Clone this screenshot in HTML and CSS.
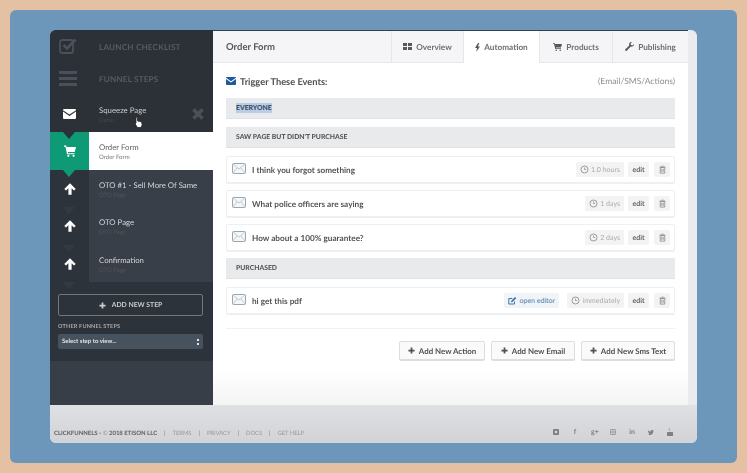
FILE: index.html
```html
<!DOCTYPE html>
<html lang="en">
<head>
<meta charset="utf-8">
<title>Order Form</title>
<link rel="stylesheet" href="styles.css">
</head>
<body>
<svg class="defs" width="0" height="0" aria-hidden="true">
  <symbol id="env-line" viewBox="0 0 14 11"><rect x=".5" y=".5" width="13" height="10" rx="1" fill="#f4f6f8" stroke="#9aa6b0"/><path d="M1 1l6 5 6-5M1 10l4-5M13 10L9 5" fill="none" stroke="#b4bec6" stroke-width=".8"/></symbol>
  <symbol id="clock" viewBox="0 0 10 10"><circle cx="5" cy="5" r="3.9" fill="none" stroke="#8f9398" stroke-width="1"/><path d="M5 2.800V5h1.800" fill="none" stroke="#8f9398" stroke-width=".9"/></symbol>
  <symbol id="trash" viewBox="0 0 10 10"><path d="M2.500 2.800h5V9h-5zM1.800 2.300h6.400M4 1.200h2M4.200 4.200v3.400M5.800 4.200v3.400" fill="none" stroke="#85898e" stroke-width=".9"/></symbol>
  <symbol id="plus" viewBox="0 0 8 8"><path d="M3 .5h2v2.500h2.500v2H5v2.500H3V5H.5V3H3z" fill="currentColor"/></symbol>
  <symbol id="up" viewBox="0 0 12 12"><path d="M6 .3l5.700 5.700-1.700 1.600L7.600 5.300V11.700H4.400V5.300L2 7.600.3 6z" fill="#fff"/></symbol>
</svg>
<div class="panel">
  <div class="window">
    <div class="top">
      <aside class="sidebar">
        <div class="nav-row nav-a">
          <svg class="nav-icon" width="18" height="16" viewBox="0 0 18 16"><rect x="1" y="2" width="13" height="13" rx="2" fill="none" stroke="#4a515b" stroke-width="1.800"/><path d="M4.500 7l3.500 3.500L16.500 1.500" fill="none" stroke="#4a515b" stroke-width="2.600"/></svg>
          <span>LAUNCH CHECKLIST</span>
        </div>
        <div class="nav-row nav-b">
          <svg class="nav-icon" width="18" height="15" viewBox="0 0 18 15"><path d="M0 0h18v3H0zM0 6h18v3H0zM0 12h18v3H0z" fill="#4a515b"/></svg>
          <span>FUNNEL STEPS</span>
        </div>
        <div class="step step-hover">
          <div class="step-icon"><svg width="13" height="10" viewBox="0 0 13 10"><path d="M0 1.200V1a1 1 0 0 1 1-1h11a1 1 0 0 1 1 1v.2L6.500 5.500z" fill="#fff"/><path d="M0 2.600l6.500 4.300L13 2.600V9a1 1 0 0 1-1 1H1a1 1 0 0 1-1-1z" fill="#fff"/></svg></div>
          <div class="step-text"><b>Squeeze Page</b><small>Optin</small></div>
          <svg class="step-x" width="12" height="12" viewBox="0 0 12 12"><path d="M1.500 1.500l9 9M10.500 1.500l-9 9" stroke="#4b5159" stroke-width="3.500"/></svg>
          <svg class="cursor" width="9" height="12" viewBox="0 0 9 12"><path d="M2 1l1.200 0 .5 4 3.800.8.700 3L7 11.500H3.500L.8 7.500l1.200-.3z" fill="#fff" stroke="#222" stroke-width=".8"/></svg>
        </div>
        <div class="step step-active">
          <div class="step-icon"><svg width="12" height="12" viewBox="0 0 11 11"><path d="M0 .5h2l.4 1.300H11L9.800 6.500H3.500l.2 1h6v1H2.800L1.300 1.500H0z" fill="#fff"/><circle cx="4" cy="9.900" r="1" fill="#fff"/><circle cx="8.800" cy="9.900" r="1" fill="#fff"/></svg></div>
          <div class="step-text"><b>Order Form</b><small>Order Form</small></div>
        </div>
        <div class="step">
          <div class="step-icon"><svg width="12" height="12"><use href="#up"/></svg></div>
          <div class="step-text"><b>OTO #1 - Sell More Of Same</b><small>OTO Page</small></div>
        </div>
        <div class="step step-tall">
          <div class="step-icon"><svg width="12" height="12"><use href="#up"/></svg></div>
          <div class="step-text"><b>OTO Page</b><small>OTO Page</small></div>
        </div>
        <div class="step">
          <div class="step-icon"><svg width="12" height="12"><use href="#up"/></svg></div>
          <div class="step-text"><b>Confirmation</b><small>OTO Page</small></div>
        </div>
        <div class="side-tools">
          <div class="add-step"><svg width="7" height="7"><use href="#plus"/></svg><span>ADD NEW STEP</span></div>
          <div class="other-label">OTHER FUNNEL STEPS</div>
          <div class="select"><span>Select step to view...</span><i></i></div>
        </div>
      </aside>
      <main class="main">
        <header class="tabs">
          <div class="page-title">Order Form</div>
          <div class="tab tab-1"><svg width="9" height="7" viewBox="0 0 9 7"><path d="M0 0h4v3H0zM5 0h4v3H5zM0 4h4v3H0zM5 4h4v3H5z" fill="#555a60"/></svg>Overview</div>
          <div class="tab tab-2 tab-on"><svg width="5" height="9" viewBox="0 0 5 9"><path d="M3 0L0 5h2L1.200 9 5 3.500H3L4.200 0z" fill="#555a60"/></svg>Automation</div>
          <div class="tab tab-3"><svg width="9" height="8" viewBox="0 0 9 8"><path d="M0 0h1.600l.3 1H9L8 4.500H2.900l.2.800H8V6H2.300L1 .8H0z" fill="#555a60"/><circle cx="3.200" cy="7.200" r=".8" fill="#555a60"/><circle cx="7.200" cy="7.200" r=".8" fill="#555a60"/></svg>Products</div>
          <div class="tab tab-4"><svg width="9" height="9" viewBox="0 0 9 9"><path d="M9 2L7.500 3.400 6 3 5.600 1.500 7 0C5.500-.3 4 .8 4.100 2.500c0 .3 0 .6.200.9L.3 7.300a1 1 0 0 0 1.400 1.400l3.900-4C7.300 5.200 9.200 3.800 9 2z" fill="#555a60"/></svg>Publishing</div>
        </header>
        <section class="content">
          <div class="trigger">
            <svg width="10" height="8" viewBox="0 0 10 8"><path d="M0 .8A.8.800 0 0 1 .8 0h8.400a.8.800 0 0 1 .8.800L5 4.200z" fill="#1d5c9c"/><path d="M0 2l5 3.400L10 2v5.200a.8.800 0 0 1-.8.800H.8a.8.800 0 0 1-.8-.8z" fill="#1d5c9c"/></svg>
            <strong>Trigger These Events:</strong>
            <span>(Email/SMS/Actions)</span>
          </div>
          <div class="group-bar"><mark>EVERYONE</mark></div>
          <div class="group-bar"><span>SAW PAGE BUT DIDN'T PURCHASE</span></div>
          <div class="card">
            <svg class="env" width="14" height="11"><use href="#env-line"/></svg>
            <b>I think you forgot something</b>
            <span class="chip chip-time"><svg width="9" height="9"><use href="#clock"/></svg>1.0 hours</span>
            <span class="chip chip-edit">edit</span>
            <span class="chip chip-del"><svg width="9" height="9"><use href="#trash"/></svg></span>
          </div>
          <div class="card">
            <svg class="env" width="14" height="11"><use href="#env-line"/></svg>
            <b>What police officers are saying</b>
            <span class="chip chip-time"><svg width="9" height="9"><use href="#clock"/></svg>1 days</span>
            <span class="chip chip-edit">edit</span>
            <span class="chip chip-del"><svg width="9" height="9"><use href="#trash"/></svg></span>
          </div>
          <div class="card">
            <svg class="env" width="14" height="11"><use href="#env-line"/></svg>
            <b>How about a 100% guarantee?</b>
            <span class="chip chip-time"><svg width="9" height="9"><use href="#clock"/></svg>2 days</span>
            <span class="chip chip-edit">edit</span>
            <span class="chip chip-del"><svg width="9" height="9"><use href="#trash"/></svg></span>
          </div>
          <div class="group-bar"><span>PURCHASED</span></div>
          <div class="card card-last">
            <svg class="env" width="14" height="11"><use href="#env-line"/></svg>
            <b>hi get this pdf</b>
            <span class="chip chip-open"><svg width="9" height="8" viewBox="0 0 9 8"><path d="M6.500 4.500V7H.8V1.500h3.500" fill="none" stroke="#3f74a8"/><path d="M3 5.200l.3-1.500L7 0l1.300 1.200L4.500 5z" fill="#3f74a8"/></svg>open editor</span>
            <span class="chip chip-time"><svg width="9" height="9"><use href="#clock"/></svg>immediately</span>
            <span class="chip chip-edit">edit</span>
            <span class="chip chip-del"><svg width="9" height="9"><use href="#trash"/></svg></span>
          </div>
          <div class="actions">
            <div class="btn btn-a"><svg width="7" height="7"><use href="#plus"/></svg>Add New Action</div>
            <div class="btn btn-b"><svg width="7" height="7"><use href="#plus"/></svg>Add New Email</div>
            <div class="btn btn-c"><svg width="7" height="7"><use href="#plus"/></svg>Add New Sms Text</div>
          </div>
        </section>
      </main>
    </div>
    <footer class="footer">
      <div class="foot-links">
        <strong>CLICKFUNNELS - <em>©</em> 2018 ETISON LLC</strong>
        <i>|</i><span>TERMS</span><i>|</i><span>PRIVACY</span><i>|</i><span>DOCS</span><i>|</i><span>GET HELP</span>
      </div>
      <div class="socials">
        <svg width="6" height="6" viewBox="0 0 6 6"><rect width="6" height="6" rx="1" fill="#7d8085"/><circle cx="3" cy="3" r="1.300" fill="#d6d7da"/></svg>
        <span>f</span>
        <span>g+</span>
        <svg width="6" height="6" viewBox="0 0 6 6"><rect x=".4" y=".4" width="5.200" height="5.200" rx="1" fill="none" stroke="#7d8085" stroke-width=".8"/><circle cx="3" cy="3" r="1.100" fill="none" stroke="#7d8085" stroke-width=".7"/></svg>
        <span>in</span>
        <svg width="6" height="5" viewBox="0 0 6 5"><path d="M6 .7L5.300 1.300C5.300 3.500 3.800 5 1.900 5 1.200 5 .5 4.800 0 4.400c.7.100 1.300-.1 1.800-.4C1.200 3.900.8 3.600.6 3.100h.5C.5 2.900.1 2.400.1 1.800c.2.100.4.100.6.100C.1 1.500 0 .8.300.3c.7.800 1.500 1.200 2.500 1.300C2.600.6 3.300 0 4.100 0c.4 0 .7.200 1 .4z" fill="#7d8085"/></svg>
        <svg width="6" height="8" viewBox="0 0 6 8"><path d="M1.500 0l.7 1.500L2.900 0h.4l-.9 2v1.300H2V2zM.5 4h5a.5.5 0 0 1 .5.500v3a.5.5 0 0 1-.5.500h-5a.5.5 0 0 1-.5-.5v-3A.5.5 0 0 1 .5 4z" fill="#7d8085"/></svg>
      </div>
    </footer>
  </div>
</div>
</body>
</html>
```

FILE: styles.css
```css
* { box-sizing: border-box; }
html, body { margin: 0; height: 100%; }
body {
  width: 747px;
  height: 473px;
  padding: 10px;
  overflow: hidden;
  background: #e5c1a3;
  font-family: "Lato", "Liberation Sans", sans-serif;
  text-rendering: geometricPrecision;
  color: #4d5156;
}
.defs { position: absolute; }
.panel {
  width: 727px;
  height: 453px;
  padding: 20px 40px;
  background: #6c97bb;
  border-radius: 6px;
}
.window {
  width: 647px;
  height: 413px;
  display: flex;
  flex-direction: column;
  border-radius: 6px;
  overflow: hidden;
  background: #ebebed;
}
/* Neutral text: soften and drop colour fringes, as in the reference capture */
.nav-row span, .step-text, .add-step, .other-label, .select span,
.page-title, .tab, .trigger strong, .trigger span, .group-bar span,
.card b, .chip-time, .chip-edit, .btn, .foot-links, .socials {
  filter: grayscale(1) blur(.25px);
}
.top { display: flex; height: 375px; }

/* Sidebar */
.sidebar {
  width: 163px;
  flex: none;
  display: flex;
  flex-direction: column;
  background: #373e48;
}
.nav-row {
  display: flex;
  align-items: center;
  background: #2c3138;
  color: #555b64;
  font-size: 8.100px;
  font-weight: 700;
  letter-spacing: .2px;
}
.nav-a { height: 32px; padding-top: 1px; }
.nav-b { height: 33px; }
.nav-icon { margin: -1px 22px 0 9px; flex: none; }
.nav-b .nav-icon { margin-top: 0; }
.step {
  position: relative;
  display: flex;
  height: 37px;
  color: #d4d7da;
  background: #383f49;
}
.step-tall { height: 38px; }
.step-icon {
  position: relative;
  width: 39px;
  flex: none;
  display: flex;
  align-items: center;
  justify-content: center;
  background: #2d333b;
}
.step-icon::after {
  content: "";
  position: absolute;
  left: 13px;
  bottom: -7px;
  z-index: 2;
  border-left: 6.500px solid transparent;
  border-right: 6.500px solid transparent;
  border-top: 7px solid #343a44;
}
.step-text {
  padding: 9px 0 0 10px;
  display: flex;
  flex-direction: column;
}
.step-text b { font-weight: 400; font-size: 7.800px; line-height: 12px; }
.step-text small { font-size: 6px; line-height: 9px; color: #4d545e; }
.step-hover { background: #2c3138; height: 37px; }
.step-hover .step-icon { background: #2c3138; }
.step-hover .step-icon::after { border-top-color: #2c3138; }
.step-hover .step-text b { color: #c9ccd0; }
.step-hover .step-text small { color: #3f454d; }
.step-x { position: absolute; right: 9px; top: 13px; }
.cursor { position: absolute; left: 84px; top: 21px; }
.step-active {
  height: 38px;
  background: #fff;
  color: #5c6066;
}
.step-active .step-icon { background: #0f9a76; }
.step-active .step-icon::after { border-top-color: #0f9a76; }
.step-active .step-text small { color: #777b80; }
.side-tools {
  height: 79px;
  padding: 12px 10px 0 8px;
  background: #2d333b;
}
.add-step {
  height: 22px;
  display: flex;
  align-items: center;
  justify-content: center;
  gap: 6px;
  border: 1.500px solid #71767d;
  border-radius: 2px;
  color: #c8cbcf;
  font-size: 6.800px;
  font-weight: 700;
}
.other-label {
  margin-top: 6px;
  color: #a6aab0;
  font-size: 5.500px;
  font-weight: 700;
  line-height: 10px;
  letter-spacing: .2px;
}
.select {
  height: 15px;
  margin-top: 2px;
  padding: 0 4px;
  display: flex;
  align-items: center;
  justify-content: space-between;
  background: #47525f;
  border-radius: 2px;
  color: #e2e4e7;
  font-size: 6px;
  font-weight: 700;
}
.select i { width: 2px; height: 6px; border-top: 2px solid #e2e4e7; border-bottom: 2px solid #e2e4e7; }

/* Main */
.main {
  width: 475px;
  flex: none;
  display: flex;
  flex-direction: column;
  background: linear-gradient(#fff 340px, #f4f4f5 375px);
}
.tabs {
  display: flex;
  height: 33px;
  flex: none;
  background: #f5f5f7;
  border-top: 1px solid #3a3f4a;
  border-bottom: 1px solid #e6e7ea;
  font-size: 8.200px;
  font-weight: 700;
  color: #6b6f74;
}
.page-title {
  width: 178px;
  padding: 1px 0 0 13px;
  display: flex;
  align-items: center;
  font-size: 9.500px;
  color: #55595e;
}
.tab {
  display: flex;
  align-items: center;
  justify-content: center;
  gap: 4px;
  border-left: 1px solid #e6e7ea;
}
.tab-1 { width: 72px; }
.tab-2 { width: 77px; }
.tab-3 { width: 72px; border-left: 0; }
.tab-4 { width: 76px; }
.tab-on { background: #fff; margin-bottom: -1px; border-right: 1px solid #e6e7ea; }
.content { padding: 0 13px; display: flex; flex-direction: column; }
.trigger {
  height: 35px;
  display: flex;
  align-items: center;
  padding-top: 1px;
  gap: 4px;
  font-size: 9.300px;
}
.trigger strong { color: #4c5055; }
.trigger span { margin-left: auto; color: #8a8e93; font-size: 8.500px; }
.group-bar {
  height: 21px;
  display: flex;
  align-items: center;
  padding-left: 10px;
  margin-bottom: 8px;
  background: #e9eaec;
  border-bottom: 1px solid #e1e2e5;
  color: #55595e;
  font-size: 6.800px;
  font-weight: 900;
}
.group-bar mark { background: #b7cde6; color: #3d4a5c; padding: 1px 0; }
.card {
  height: 28px;
  display: flex;
  align-items: center;
  margin-bottom: 6px;
  padding: 0 4px 0 5px;
  background: #fff;
  border: 1px solid #eeeff1;
  border-bottom-width: 2px;
  border-radius: 2px;
}
.card .env { flex: none; margin: -3px 6px 0 0; }
.card b { margin-right: auto; font-size: 8.200px; color: #4f5358; font-weight: 700; }
.chip {
  height: 15px;
  display: flex;
  align-items: center;
  justify-content: center;
  gap: 2.500px;
  margin-left: 4px;
  padding: 0 4px;
  background: #f3f3f4;
  border-radius: 2px;
  font-size: 7px;
  color: #a8abaf;
}
.chip-edit { width: 21px; padding: 0; color: #5d6166; font-weight: 700; font-size: 7px; }
.chip-del { width: 16px; padding: 0; margin-left: 5px; }
.chip-open { color: #467bae; background: #f1f4f7; margin-right: 4px; }
.card-last { margin-bottom: 13px; }
.actions {
  display: flex;
  justify-content: flex-end;
  gap: 6px;
  padding-top: 12px;
  border-top: 1px solid #f1f1f2;
}
.btn {
  height: 20px;
  display: flex;
  align-items: center;
  justify-content: center;
  gap: 4px;
  background: #fafafa;
  border: 1px solid #dcdde0;
  border-bottom-width: 2px;
  border-radius: 2px;
  color: #4d5156;
  font-size: 7.900px;
  font-weight: 700;
}
.btn-a { width: 86px; }
.btn-b { width: 84px; }
.btn-c { width: 94px; }

/* Footer */
.footer {
  height: 38px;
  padding: 17px 24px 0 4px;
  display: flex;
  justify-content: space-between;
  background: linear-gradient(#dfe0e4, #d2d3d6);
  font-size: 5.800px;
  color: #94979c;
}
.foot-links { display: flex; gap: 7px; line-height: 20px; margin-top: 2px; }
.foot-links strong { color: #66696f; font-weight: 900; font-size: 5.950px; }
.foot-links em { font-style: normal; font-weight: 400; color: #94979c; }
.foot-links i { font-style: normal; color: #77797e; }
.socials { display: flex; align-items: center; gap: 13px; height: 20px; color: #7d8085; font-weight: 700; font-size: 7px; }
.socials > * { width: 6px; text-align: center; flex: none; }
```
